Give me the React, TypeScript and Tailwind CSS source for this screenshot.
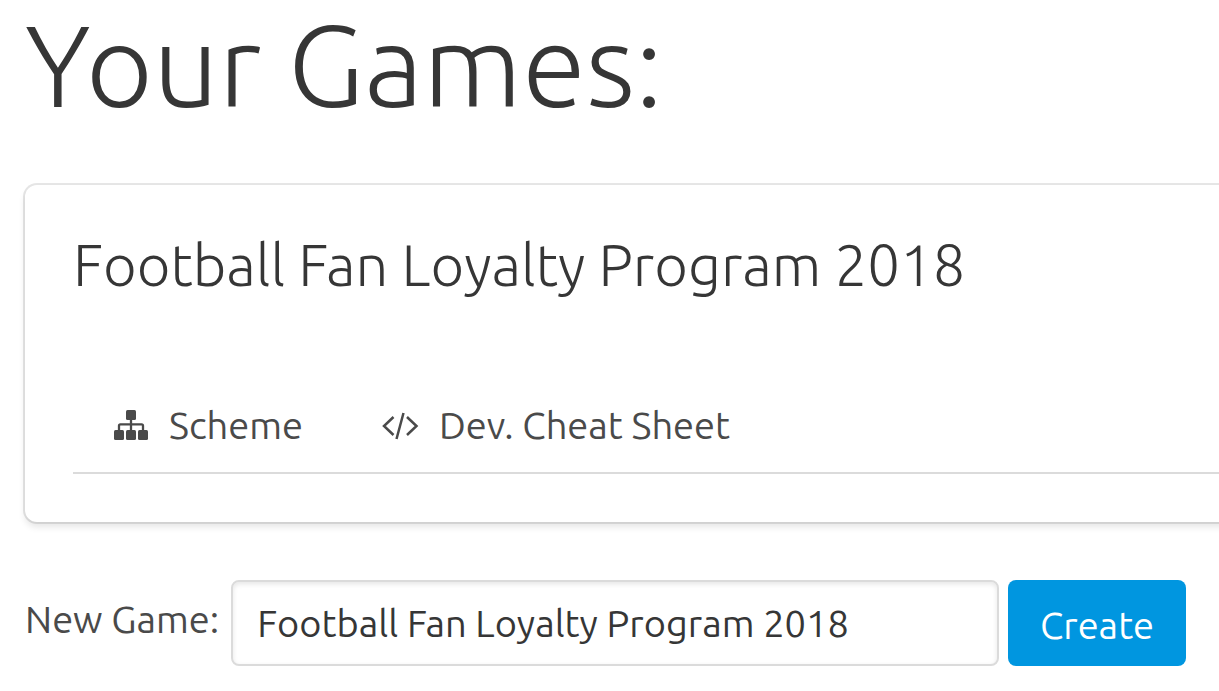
import { useState } from "react";

function SitemapIcon() {
  return (
    <svg width="36" height="32" viewBox="0 0 36 32" fill="currentColor" aria-hidden="true">
      <rect x="13" y="1" width="10" height="10" rx="1.500" />
      <rect x="1" y="21" width="10" height="10" rx="1.500" />
      <rect x="13" y="21" width="10" height="10" rx="1.500" />
      <rect x="25" y="21" width="10" height="10" rx="1.500" />
      <path d="M18 10v12M6 22v-5.200q0-1.400 1.400-1.400h21.200q1.400 0 1.400 1.400V22" fill="none" stroke="currentColor" strokeWidth="2.300" />
    </svg>
  );
}

function CodeIcon() {
  return (
    <svg width="38" height="32" viewBox="0 0 38 32" fill="none" stroke="currentColor" strokeWidth="2.500" aria-hidden="true">
      <path d="M12.500 8 3 17l9.500 9M26 8l9.500 9-9.500 9M22.500 4l-7 26" />
    </svg>
  );
}

export default function App() {
  const [name, setName] = useState("Football Fan Loyalty Program 2018");
  return (
    <main className="overflow-hidden bg-white pl-[25px] font-['Ubuntu','Open_Sans',sans-serif] text-[#4a4a4a]">
      <h1 className="text-[116px] leading-[128px] font-light text-[#363636]">Your Games:</h1>
      <section className="mt-[57px] -mr-6 rounded-xl px-12 pt-11 pb-12 shadow-[0_5px_7px_rgba(10,10,10,0.1),0_0_0_2px_rgba(10,10,10,0.1)]">
        <h2 className="text-[58px] leading-[72px] font-light text-[#363636]">Football Fan Loyalty Program 2018</h2>
        <nav className="mt-[99px] -mr-12 flex gap-[78px] border-b-2 border-[#dbdbdb] pb-[22px] pl-10 text-[38px] leading-[50px]">
          <a href="#scheme" className="flex items-center gap-5"><SitemapIcon />Scheme</a>
          <a href="#dev" className="flex items-center gap-5"><CodeIcon />Dev. Cheat Sheet</a>
        </nav>
      </section>
      <form className="mt-[58px] flex items-center gap-[9px] pr-[33px] text-[38px]" onSubmit={(e) => e.preventDefault()}>
        <label htmlFor="game" className="pr-[3px] pb-2">New Game:</label>
        <input id="game" value={name} onChange={(e) => setName(e.target.value)} className="h-[86px] min-w-0 flex-1 rounded-lg border-2 border-[#dbdbdb] px-6 text-[#363636] shadow-[inset_0_2px_5px_rgba(10,10,10,0.1)] outline-none" />
        <button className="h-[86px] rounded-lg bg-[#0096e0] px-8 pt-1 text-white">Create</button>
      </form>
    </main>
  );
}
